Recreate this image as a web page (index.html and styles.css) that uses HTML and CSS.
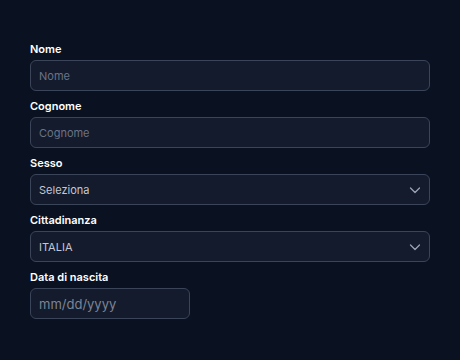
FILE: index.html
```html
<!DOCTYPE html>
<html>

<head>
    <title>Dati anagrafici</title>
    <link rel="stylesheet" href="styles.css">
</head>

<body>
    <form class="form">
        <div class="field">
            <label for="nome">Nome</label>
            <input id="nome" type="text" placeholder="Nome">
        </div>
        <div class="field">
            <label for="cognome">Cognome</label>
            <input id="cognome" type="text" placeholder="Cognome">
        </div>
        <div class="field">
            <label for="sesso">Sesso</label>
            <select id="sesso">
                <option>Seleziona</option>
                <option>Maschio</option>
                <option>Femmina</option>
            </select>
        </div>
        <div class="field">
            <label for="cittadinanza">Cittadinanza</label>
            <select id="cittadinanza">
                <option>ITALIA</option>
            </select>
        </div>
        <div class="field">
            <label for="nascita">Data di nascita</label>
            <input id="nascita" class="date" type="text" placeholder="mm/dd/yyyy">
        </div>
    </form>
</body>

</html>
```

FILE: styles.css
```css
body {
    margin: 0;
    background-color: #0a1221;
    font-family: Inter, "Noto Sans", sans-serif;
    color: #ffffff;
}

.form {
    padding: 41px 30px 0 30px;
    display: flex;
    flex-direction: column;
    gap: 7px;
}

.field {
    display: flex;
    flex-direction: column;
}

label {
    font-size: 11px;
    font-weight: 600;
    line-height: 16px;
    margin-bottom: 3px;
}

input,
select {
    box-sizing: border-box;
    height: 31px;
    width: 100%;
    padding: 0 8px;
    border: 1px solid #3b4559;
    border-radius: 6px;
    background-color: #131b2d;
    color: #c3c8d2;
    font-family: Inter, "Noto Sans", sans-serif;
    font-size: 11px;
    outline: none;
}

input::placeholder {
    color: #6b7385;
}

select {
    appearance: none;
    background-image: url("data:image/svg+xml,%3Csvg xmlns='http://www.w3.org/2000/svg' width='12' height='12' viewBox='0 0 12 12'%3E%3Cpath d='M1.5 4l4.5 4.5L10.5 4' fill='none' stroke='%239aa3b5' stroke-width='1.3' stroke-linecap='round' stroke-linejoin='round'/%3E%3C/svg%3E");
    background-repeat: no-repeat;
    background-position: right 8px center;
}

.date {
    width: 160px;
    font-size: 13px;
}

.date::placeholder {
    color: #7c8496;
}
```
